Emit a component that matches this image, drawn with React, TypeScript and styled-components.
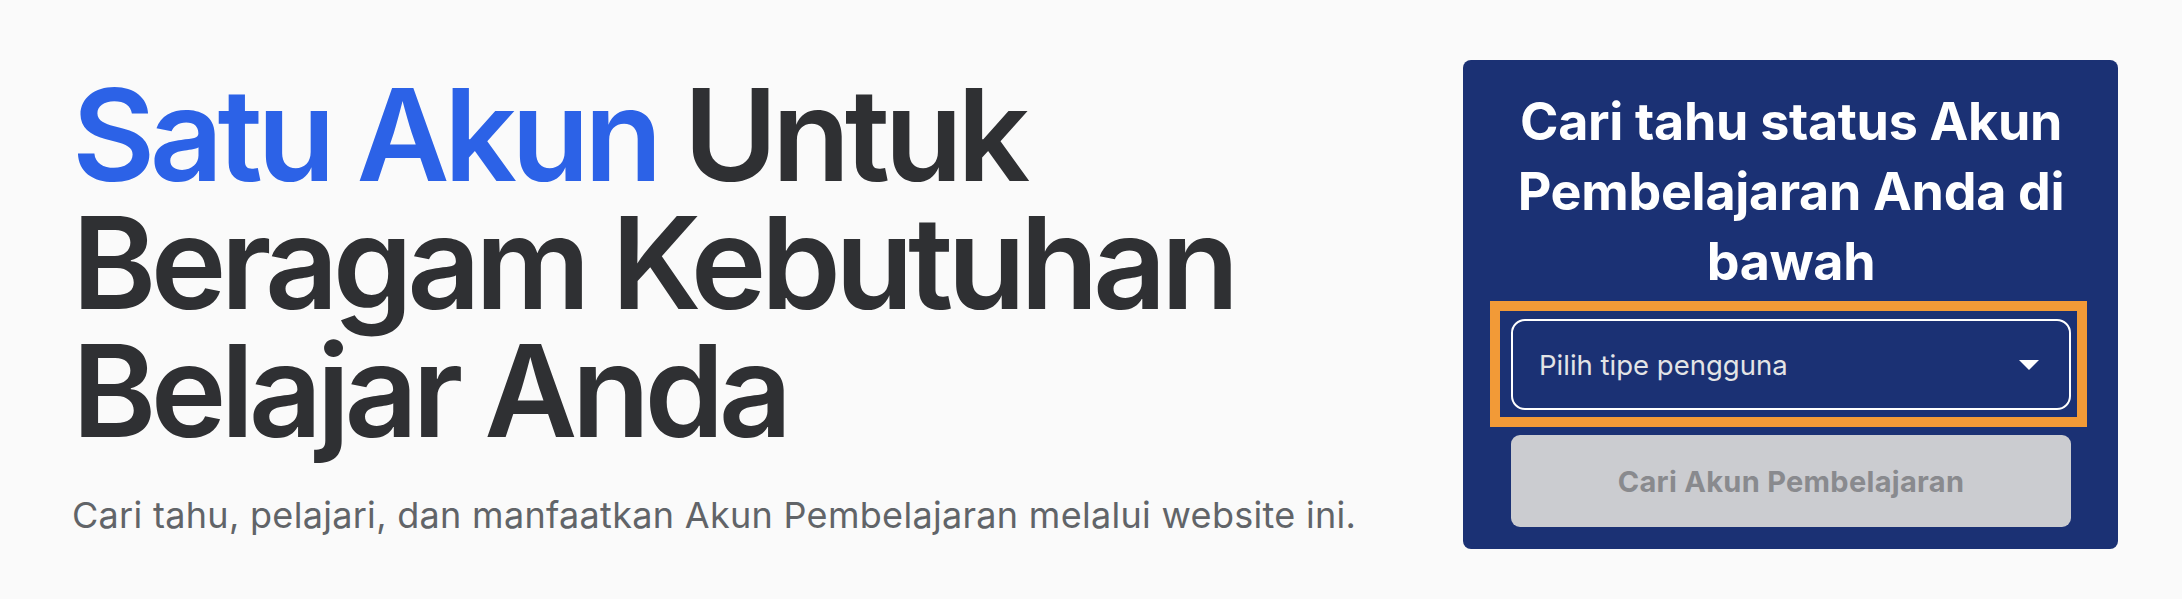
import React from "react";
import styled, { createGlobalStyle } from "styled-components";

const GlobalStyle = createGlobalStyle`
  html, body {
    margin: 0;
    padding: 0;
    background: #fafafa;
    font-family: Inter, "Noto Sans", "Liberation Sans", sans-serif;
  }
  * { box-sizing: border-box; }
`;

const Hero = styled.section`
  display: flex;
  align-items: center;
  justify-content: space-between;
  height: 599px;
  padding: 10px 64px 0 72px;
`;

const Intro = styled.div`
  display: flex;
  flex-direction: column;
  gap: 36px;
`;

const Headline = styled.h1`
  margin: 0;
  font-size: 128px;
  line-height: 128px;
  font-weight: 600;
  letter-spacing: -5.6px;
  color: #2f3033;
`;

const Accent = styled.span`
  color: #2c62e7;
`;

const Lead = styled.p`
  margin: 0;
  font-size: 36px;
  line-height: 48px;
  font-weight: 400;
  letter-spacing: 0.3px;
  color: #616468;
`;

const Panel = styled.div`
  width: 655px;
  height: 489px;
  background: #1b3174;
  border-radius: 8px;
  padding: 27px 47px 0 48px;
  display: flex;
  flex-direction: column;
  align-items: stretch;
`;

const PanelTitle = styled.h2`
  margin: 0 0 4px;
  text-align: center;
  color: #ffffff;
  font-size: 52px;
  line-height: 70px;
  font-weight: 700;
  letter-spacing: -0.3px;
`;

const Highlight = styled.div`
  margin: 0 -16px 0 -21px;
  border: 10px solid #f29a37;
  padding: 8px 6px 7px 11px;
`;

const SelectBox = styled.button`
  width: 100%;
  height: 91px;
  display: flex;
  align-items: center;
  justify-content: space-between;
  padding: 0 30px 0 26px;
  background: transparent;
  border: 2px solid #ffffff;
  border-radius: 14px;
  color: #e3e4e6;
  font-family: inherit;
  font-size: 27.5px;
  font-weight: 400;
  cursor: pointer;
`;

const SearchButton = styled.button`
  margin-top: 8px;
  height: 92px;
  width: 100%;
  border: none;
  border-radius: 9px;
  background: #cbccd0;
  color: #898a8e;
  font-family: inherit;
  font-size: 29px;
  font-weight: 700;
  letter-spacing: 0.3px;
  cursor: not-allowed;
`;

const Caret = () => (
  <svg width="20" height="10" viewBox="0 0 20 10" aria-hidden="true">
    <path d="M0 0 H20 L10 10 Z" fill="#ffffff" />
  </svg>
);

export default function App() {
  return (
    <>
      <GlobalStyle />
      <Hero>
        <Intro>
          <Headline>
            <Accent>Satu Akun</Accent> Untuk
            <br />
            Beragam Kebutuhan
            <br />
            Belajar Anda
          </Headline>
          <Lead>Cari tahu, pelajari, dan manfaatkan Akun Pembelajaran melalui website ini.</Lead>
        </Intro>
        <Panel>
          <PanelTitle>Cari tahu status Akun Pembelajaran Anda di bawah</PanelTitle>
          <Highlight>
            <SelectBox type="button">
              <span>Pilih tipe pengguna</span>
              <Caret />
            </SelectBox>
          </Highlight>
          <SearchButton type="button" disabled>
            Cari Akun Pembelajaran
          </SearchButton>
        </Panel>
      </Hero>
    </>
  );
}
